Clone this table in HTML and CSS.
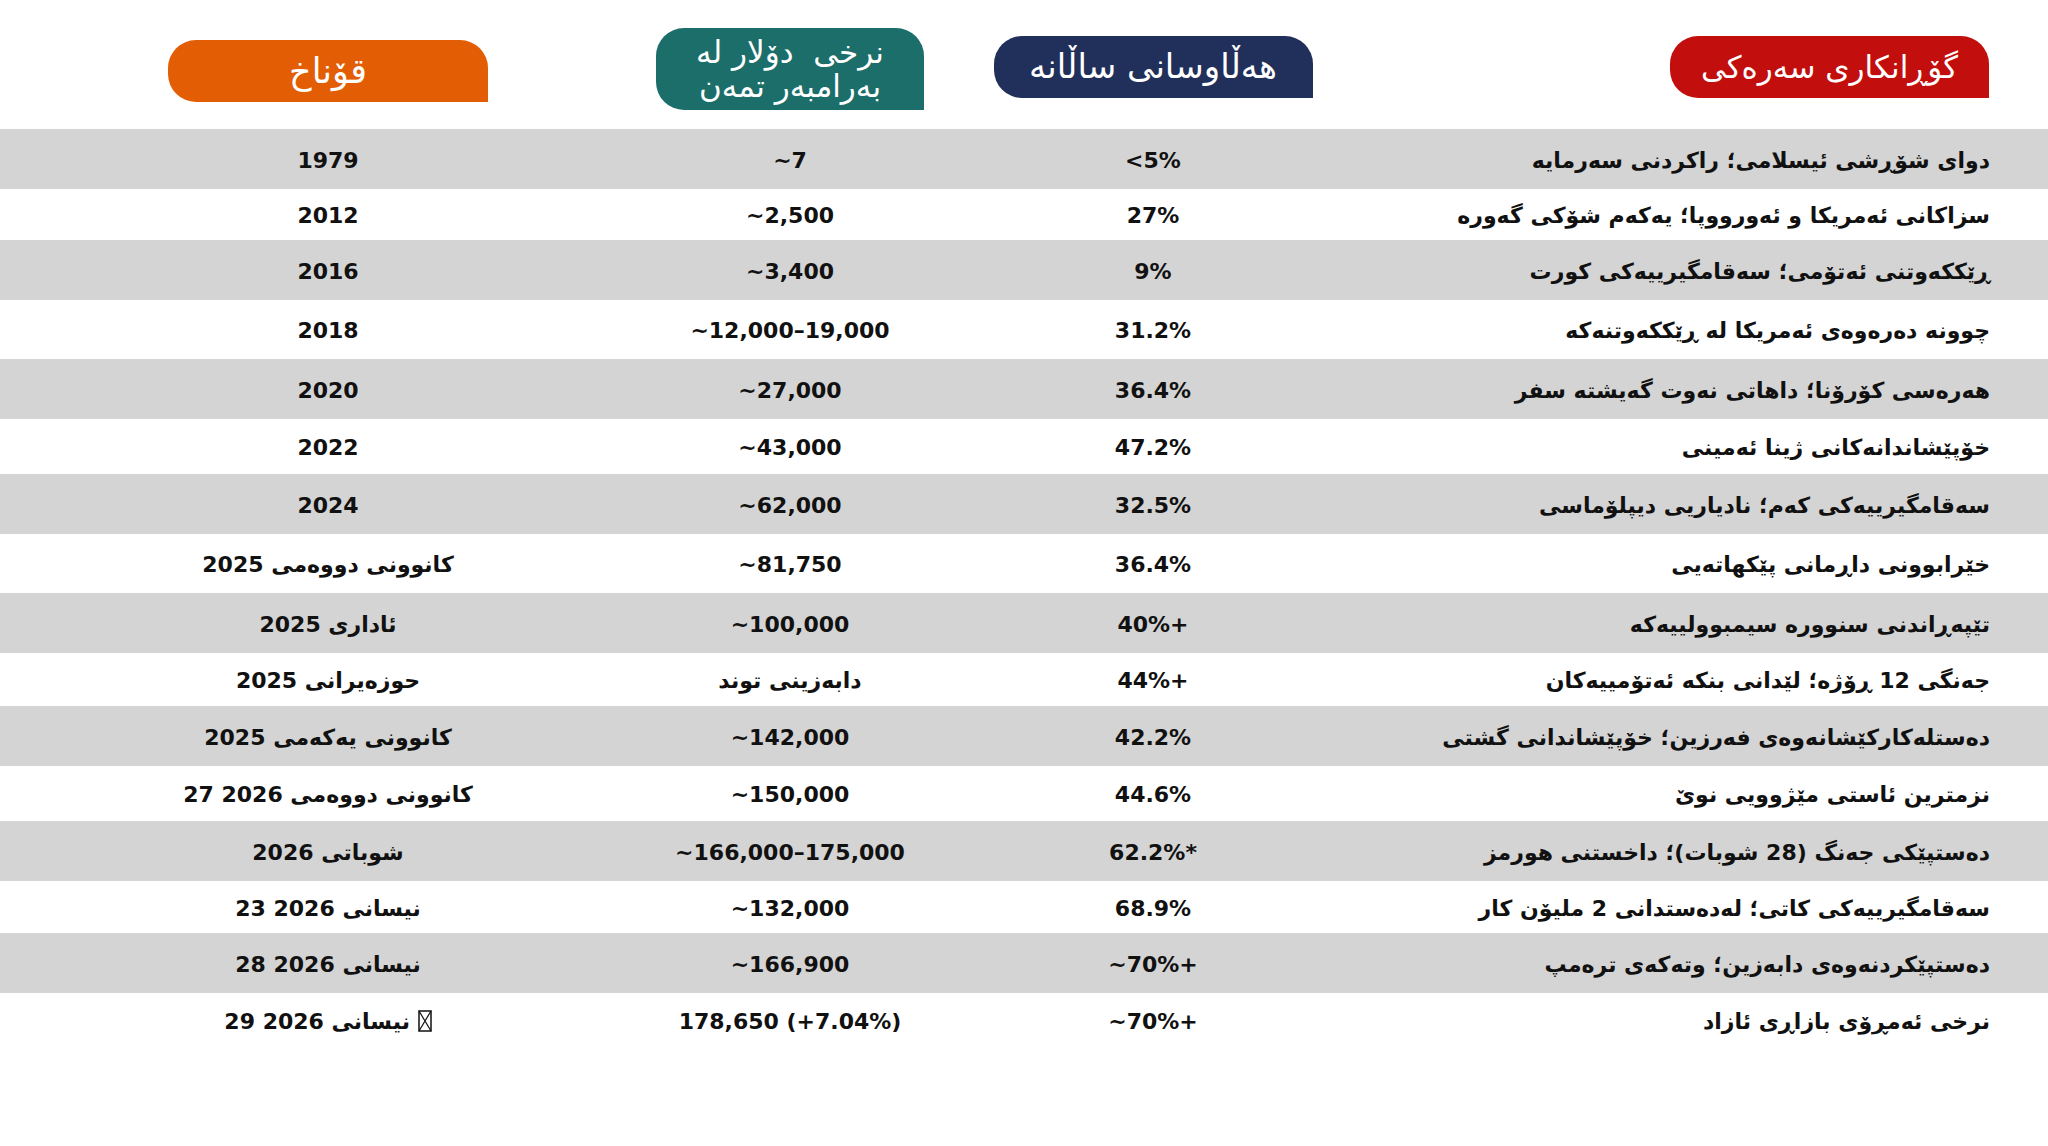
FILE: index.html
```html
<!DOCTYPE html>
<html lang="ckb" dir="rtl">
<head>
<meta charset="utf-8">
<title>نرخی دۆلار</title>
<link rel="stylesheet" href="styles.css">
</head>
<body>
<div class="page">
  <div class="head cols">
    <div class="hcell c1"><div class="pill red">گۆڕانکاری سەرەکی</div></div>
    <div class="hcell"><div class="pill navy">هەڵاوسانی ساڵانە</div></div>
    <div class="hcell"><div class="pill teal">نرخی&nbsp; دۆلار لە<br>بەرامبەر تمەن</div></div>
    <div class="hcell"><div class="pill orange">قۆناخ</div></div>
  </div>
  <div class="table">
    <div class="row cols"><div class="cell desc">دوای شۆڕشی ئیسلامی؛ راکردنی سەرمایە</div><div class="cell"><span class="ltr">&lt;5%</span></div><div class="cell"><span class="ltr">~7</span></div><div class="cell">1979</div></div>
    <div class="row cols"><div class="cell desc">سزاکانی ئەمریکا و ئەورووپا؛ یەکەم شۆکی گەورە</div><div class="cell"><span class="ltr">27%</span></div><div class="cell"><span class="ltr">~2,500</span></div><div class="cell">2012</div></div>
    <div class="row cols"><div class="cell desc">ڕێککەوتنی ئەتۆمی؛ سەقامگیرییەکی کورت</div><div class="cell"><span class="ltr">9%</span></div><div class="cell"><span class="ltr">~3,400</span></div><div class="cell">2016</div></div>
    <div class="row cols"><div class="cell desc">چوونە دەرەوەی ئەمریکا لە ڕێککەوتنەکە</div><div class="cell"><span class="ltr">31.2%</span></div><div class="cell"><span class="ltr">~12,000–19,000</span></div><div class="cell">2018</div></div>
    <div class="row cols"><div class="cell desc">هەرەسی کۆرۆنا؛ داهاتی نەوت گەیشتە سفر</div><div class="cell"><span class="ltr">36.4%</span></div><div class="cell"><span class="ltr">~27,000</span></div><div class="cell">2020</div></div>
    <div class="row cols"><div class="cell desc">خۆپێشاندانەکانی ژینا ئەمینی</div><div class="cell"><span class="ltr">47.2%</span></div><div class="cell"><span class="ltr">~43,000</span></div><div class="cell">2022</div></div>
    <div class="row cols"><div class="cell desc">سەقامگیرییەکی کەم؛ نادیاریی دیپلۆماسی</div><div class="cell"><span class="ltr">32.5%</span></div><div class="cell"><span class="ltr">~62,000</span></div><div class="cell">2024</div></div>
    <div class="row cols"><div class="cell desc">خێرابوونی داڕمانی پێکهاتەیی</div><div class="cell"><span class="ltr">36.4%</span></div><div class="cell"><span class="ltr">~81,750</span></div><div class="cell">کانوونی دووەمی 2025</div></div>
    <div class="row cols"><div class="cell desc">تێپەڕاندنی سنوورە سیمبوولییەکە</div><div class="cell"><span class="ltr">40%+</span></div><div class="cell"><span class="ltr">~100,000</span></div><div class="cell">ئاداری 2025</div></div>
    <div class="row cols"><div class="cell desc">جەنگی 12 ڕۆژە؛ لێدانی بنکە ئەتۆمییەکان</div><div class="cell"><span class="ltr">44%+</span></div><div class="cell">دابەزینی توند</div><div class="cell">حوزەیرانی 2025</div></div>
    <div class="row cols"><div class="cell desc">دەستلەکارکێشانەوەی فەرزین؛ خۆپێشاندانی گشتی</div><div class="cell"><span class="ltr">42.2%</span></div><div class="cell"><span class="ltr">~142,000</span></div><div class="cell">کانوونی یەکەمی 2025</div></div>
    <div class="row cols"><div class="cell desc">نزمترین ئاستی مێژوویی نوێ</div><div class="cell"><span class="ltr">44.6%</span></div><div class="cell"><span class="ltr">~150,000</span></div><div class="cell">کانوونی دووەمی 2026 27</div></div>
    <div class="row cols"><div class="cell desc">دەستپێکی جەنگ (28 شوبات)؛ داخستنی هورمز</div><div class="cell"><span class="ltr">62.2%*</span></div><div class="cell"><span class="ltr">~166,000–175,000</span></div><div class="cell">شوباتی 2026</div></div>
    <div class="row cols"><div class="cell desc">سەقامگیرییەکی کاتی؛ لەدەستدانی 2 ملیۆن کار</div><div class="cell"><span class="ltr">68.9%</span></div><div class="cell"><span class="ltr">~132,000</span></div><div class="cell">نیسانی 2026 23</div></div>
    <div class="row cols"><div class="cell desc">دەستپێکردنەوەی دابەزین؛ وتەکەی ترەمپ</div><div class="cell"><span class="ltr">~70%+</span></div><div class="cell"><span class="ltr">~166,900</span></div><div class="cell">نیسانی 2026 28</div></div>
    <div class="row cols"><div class="cell desc">نرخی ئەمڕۆی بازاڕی ئازاد</div><div class="cell"><span class="ltr">~70%+</span></div><div class="cell"><span class="ltr">178,650 (+7.04%)</span></div><div class="cell"><span class="tofu"><svg width="14" height="22" viewBox="0 0 14 22"><rect x="1" y="1" width="12" height="20" fill="none" stroke="#111" stroke-width="1.5"/><path d="M1 1 L13 21 M13 1 L1 21" stroke="#111" stroke-width="1.2"/></svg></span> نیسانی 2026 29</div></div>
  </div>
</div>
</body>
</html>
```

FILE: styles.css
```css
html, body {
  margin: 0;
  padding: 0;
  background: #ffffff;
}

.page {
  direction: rtl;
  width: 2048px;
  font-family: "DejaVu Sans", "Noto Sans", sans-serif;
  color: #111111;
}

.cols {
  display: grid;
  grid-template-columns: 666px 458px 268px 656px;
}

.head {
  height: 129px;
  align-items: start;
}

.hcell {
  display: flex;
  justify-content: center;
}

.hcell.c1 {
  justify-content: flex-start;
  padding-inline-start: 59px;
}

.pill {
  box-sizing: border-box;
  width: 319px;
  height: 62px;
  margin-top: 36px;
  border-radius: 28px 28px 0 28px;
  color: #ffffff;
  font-size: 31px;
  display: flex;
  align-items: center;
  justify-content: center;
  text-align: center;
  line-height: 1.1;
}

.red {
  background: #c20f0d;
}

.navy {
  background: #21305a;
  font-size: 34px;
}

.teal {
  background: #1c6e6a;
  width: 281px;
  height: 82px;
  margin-top: 28px;
  font-size: 31px;
  line-height: 34px;
}

.orange {
  background: #e35d04;
  width: 320px;
  margin-top: 40px;
  font-size: 35px;
}

.row {
  height: 55px;
  align-items: center;
  font-size: 22px;
  font-weight: bold;
  padding-top: 2px;
  box-sizing: border-box;
}

.row:nth-child(odd) {
  background: #d4d4d4;
  height: 60px;
}

.row:nth-child(2) { height: 51px; }
.row:nth-child(4) { height: 59px; }
.row:nth-child(6) { height: 55px; }
.row:nth-child(8) { height: 59px; }
.row:nth-child(10) { height: 53px; }
.row:nth-child(12) { height: 55px; }
.row:nth-child(14) { height: 52px; }
.row:nth-child(16) { height: 55px; }

.cell {
  text-align: center;
  white-space: nowrap;
}

.cell.desc {
  text-align: start;
  padding-inline-start: 58px;
}

.ltr {
  direction: ltr;
  unicode-bidi: isolate;
}

.tofu svg {
  vertical-align: -3px;
}
```
